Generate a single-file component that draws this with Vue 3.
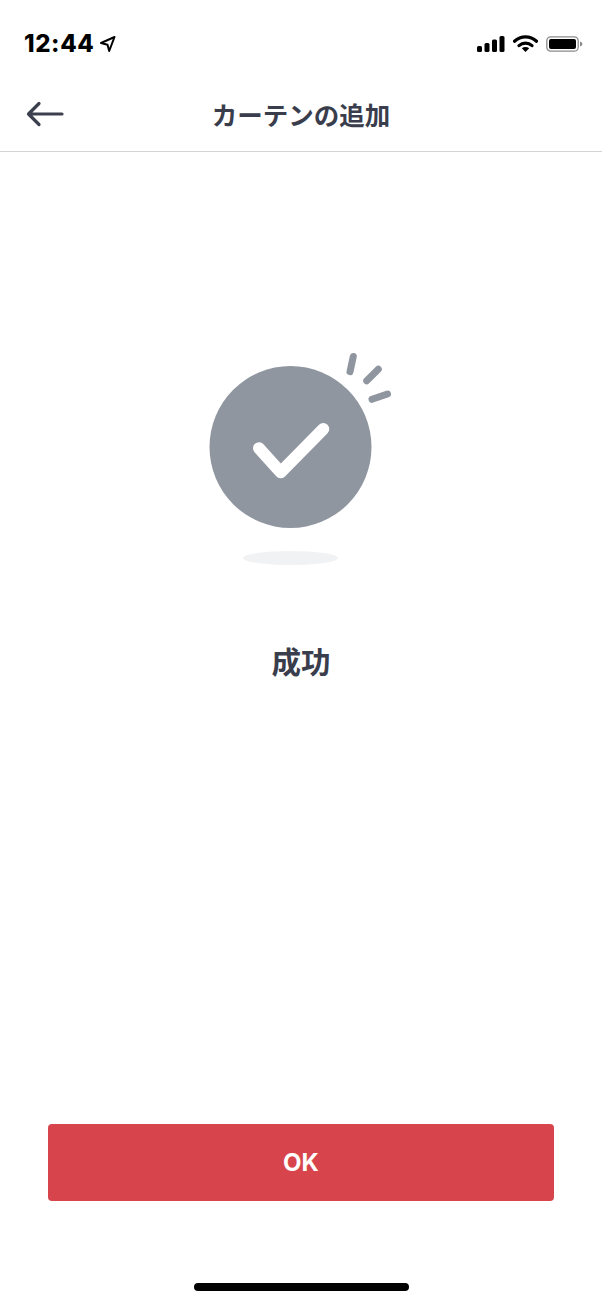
<script setup>
const title = 'カーテンの追加'
</script>

<template>
  <div class="page">
    <div class="status">
      <div class="time-group">
        <span class="time">12:44</span>
        <svg class="loc" width="18" height="18" viewBox="0 0 18 18">
          <path d="M15.500 2 2 8l6.500 1.700L10.200 16Z" fill="none" stroke="#000" stroke-width="2" stroke-linejoin="round" />
        </svg>
      </div>
      <div class="status-icons">
        <svg width="28" height="18" viewBox="0 0 28 18">
          <rect x="0" y="11" width="5" height="6" rx="1.500" />
          <rect x="7.500" y="8" width="5" height="9" rx="1.500" />
          <rect x="15" y="4.500" width="5" height="12.500" rx="1.500" />
          <rect x="22.500" y="1" width="5" height="16" rx="1.500" />
        </svg>
        <svg width="25" height="18" viewBox="0 0 25 18">
          <path d="M1.500 6.200C7.800.4 17.200.4 23.500 6.200" fill="none" stroke="#000" stroke-width="3.200" stroke-linecap="round" />
          <path d="M6 10.600c3.700-3.200 9.300-3.200 13 0" fill="none" stroke="#000" stroke-width="3.200" stroke-linecap="round" />
          <path d="M8.800 13.300c2.200-1.700 5.200-1.700 7.400 0L12.500 17Z" />
        </svg>
        <svg width="37" height="18" viewBox="0 0 37 18">
          <rect x=".8" y="1.800" width="31.400" height="14.400" rx="4" fill="none" stroke="#8a8a8a" stroke-width="1.300" />
          <rect x="3" y="4" width="27" height="10" rx="2" />
          <path d="M34 6.500c1.600.4 2.400 1.300 2.400 2.500s-.8 2.100-2.400 2.500Z" fill="#8a8a8a" />
        </svg>
      </div>
    </div>

    <header class="nav">
      <svg class="back" width="38" height="26" viewBox="0 0 38 26">
        <path d="M36 13H3M13 2.500 2.500 13 13 23.500" fill="none" stroke="#3c3f4e" stroke-width="3.200" stroke-linecap="round" stroke-linejoin="round" />
      </svg>
      <h1 class="title">{{ title }}</h1>
    </header>

    <main class="content">
      <svg class="art" width="204" height="230" viewBox="0 0 204 230">
        <circle cx="100.500" cy="107" r="81" fill="#9096a0" />
        <path d="M69 108.300 90.700 132.300 133.300 89" fill="none" stroke="#fff" stroke-width="12" stroke-linecap="round" stroke-linejoin="round" />
        <g fill="none" stroke="#9096a0" stroke-width="7" stroke-linecap="round">
          <path d="M163.300 16.500 160 31.700" />
          <path d="M188.300 29.300 176.700 40.700" />
          <path d="M197.500 54 182 59.300" />
        </g>
        <ellipse cx="100.500" cy="218" rx="47.500" ry="7" fill="#f1f2f4" />
      </svg>
      <p class="message">成功</p>
    </main>

    <footer class="actions">
      <button class="ok" type="button">OK</button>
    </footer>

    <div class="home-row">
      <div class="home-bar"></div>
    </div>
  </div>
</template>

<style>
html, body { margin: 0; background: #fff; }
</style>

<style scoped>
.page {
  width: 602px;
  height: 1304px;
  display: flex;
  flex-direction: column;
  background: #fff;
  font-family: Inter, "Noto Sans CJK JP", sans-serif;
  overflow: hidden;
}
.status {
  height: 76px;
  flex: none;
  box-sizing: border-box;
  padding: 30px 19px 0 24px;
  display: flex;
  justify-content: space-between;
  align-items: flex-start;
}
.time-group { display: flex; align-items: center; gap: 5px; height: 28px; }
.time { font-size: 24px; font-weight: 800; color: #000; letter-spacing: .6px; line-height: 28px; }
.loc { margin-top: -1px; }
.status-icons { display: flex; align-items: center; gap: 8px; height: 28px; }
.nav {
  height: 76px;
  flex: none;
  box-sizing: border-box;
  border-bottom: 1px solid #d4d4d6;
  position: relative;
  display: flex;
  align-items: center;
  justify-content: center;
}
.back { position: absolute; left: 26px; top: 25px; }
.title {
  margin: 0;
  font-family: "Noto Sans CJK JP", sans-serif;
  font-size: 25.500px;
  font-weight: 700;
  color: #3a3d4c;
  line-height: 32px;
}
.content {
  flex: 1;
  display: flex;
  flex-direction: column;
  align-items: center;
  padding-top: 188px;
}
.art { display: block; flex: none; margin-right: 18px; }
.message {
  margin: 70px 0 0;
  font-family: "Noto Sans CJK JP", sans-serif;
  font-size: 29.500px;
  font-weight: 700;
  line-height: 40px;
  color: #3a3d4c;
}
.actions { flex: none; padding: 0 48px; }
.ok {
  display: block;
  width: 100%;
  height: 77px;
  border: 0;
  border-radius: 4px;
  background: #d8444b;
  color: #fff;
  font-family: Inter, sans-serif;
  font-size: 24px;
  font-weight: 700;
  padding: 0;
}
.home-row { flex: none; height: 103px; display: flex; justify-content: center; padding-top: 82px; box-sizing: border-box; }
.home-bar { width: 215px; height: 8px; border-radius: 4px; background: #000; }
</style>
